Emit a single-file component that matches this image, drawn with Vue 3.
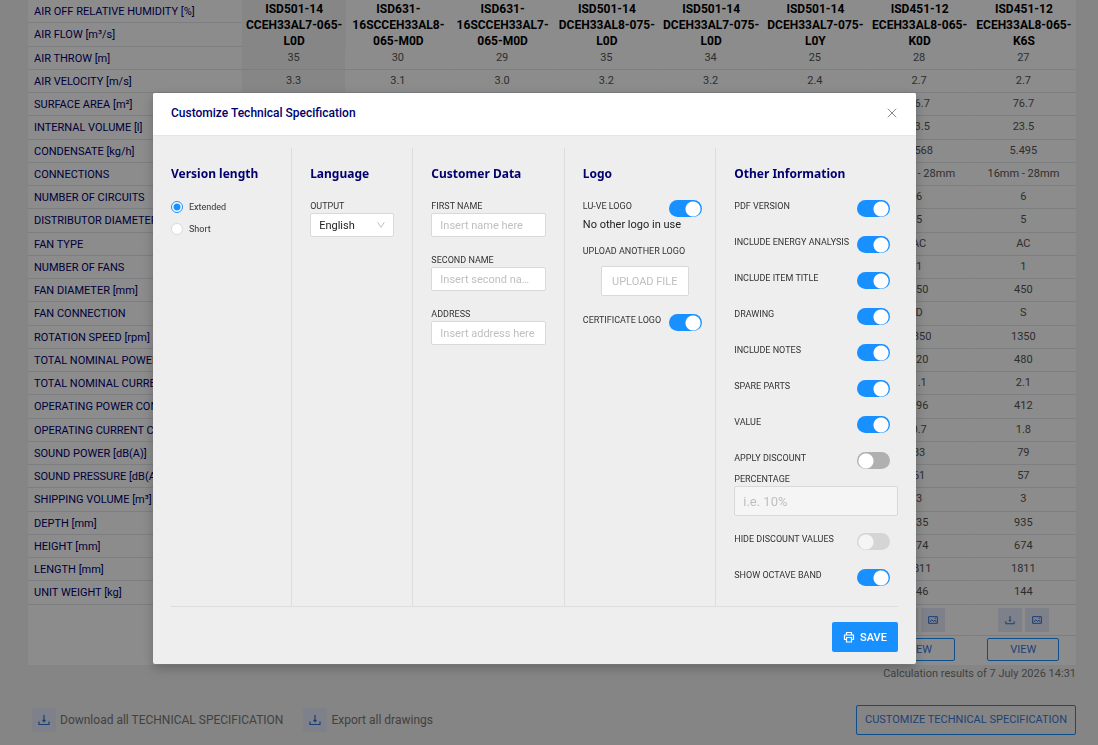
<script setup>
import { reactive, ref } from 'vue'

const models = [
  ['ISD501-14', 'CCEH33AL7-065-', 'L0D'],
  ['ISD631-', '16SCCEH33AL8-', '065-M0D'],
  ['ISD631-', '16SCCEH33AL7-', '065-M0D'],
  ['ISD501-14', 'DCEH33AL8-075-', 'L0D'],
  ['ISD501-14', 'DCEH33AL7-075-', 'L0D'],
  ['ISD501-14', 'DCEH33AL7-075-', 'L0Y'],
  ['ISD451-12', 'ECEH33AL8-065-', 'K0D'],
  ['ISD451-12', 'ECEH33AL8-065-', 'K6S'],
]

const tail = (a, b) => ['', '', '', '', '', '', a, b]

const rows = [
  { label: 'AIR OFF RELATIVE HUMIDITY [%]', values: tail('', '') },
  { label: 'AIR FLOW [m³/s]', values: tail('', '') },
  { label: 'AIR THROW [m]', values: ['35', '30', '29', '35', '34', '25', '28', '27'] },
  { label: 'AIR VELOCITY [m/s]', values: ['3.3', '3.1', '3.0', '3.2', '3.2', '2.4', '2.7', '2.7'] },
  { label: 'SURFACE AREA [m²]', values: tail('76.7', '76.7') },
  { label: 'INTERNAL VOLUME [l]', values: tail('23.5', '23.5') },
  { label: 'CONDENSATE [kg/h]', values: tail('5.568', '5.495') },
  { label: 'CONNECTIONS', values: tail('16mm - 28mm', '16mm - 28mm') },
  { label: 'NUMBER OF CIRCUITS', values: tail('6', '6') },
  { label: 'DISTRIBUTOR DIAMETER [mm]', values: tail('5', '5') },
  { label: 'FAN TYPE', values: tail('AC', 'AC') },
  { label: 'NUMBER OF FANS', values: tail('1', '1') },
  { label: 'FAN DIAMETER [mm]', values: tail('450', '450') },
  { label: 'FAN CONNECTION', values: tail('D', 'S') },
  { label: 'ROTATION SPEED [rpm]', values: tail('1350', '1350') },
  { label: 'TOTAL NOMINAL POWER [W]', values: tail('720', '480') },
  { label: 'TOTAL NOMINAL CURRENT [A]', values: tail('1.1', '2.1') },
  { label: 'OPERATING POWER CONS. [W]', values: tail('396', '412') },
  { label: 'OPERATING CURRENT CONS. [A]', values: tail('0.7', '1.8') },
  { label: 'SOUND POWER [dB(A)]', values: tail('83', '79') },
  { label: 'SOUND PRESSURE [dB(A)]', values: tail('61', '57') },
  { label: 'SHIPPING VOLUME [m³]', values: tail('3', '3') },
  { label: 'DEPTH [mm]', values: tail('935', '935') },
  { label: 'HEIGHT [mm]', values: tail('674', '674') },
  { label: 'LENGTH [mm]', values: tail('1811', '1811') },
  { label: 'UNIT WEIGHT [kg]', values: tail('146', '144') },
]

const version = ref('extended')
const language = ref('English')

const customer = reactive([
  { id: 'first-name', label: 'FIRST NAME', hint: 'Insert name here', value: '' },
  { id: 'second-name', label: 'SECOND NAME', hint: 'Insert second name here', value: '' },
  { id: 'address', label: 'ADDRESS', hint: 'Insert address here', value: '' },
])

const logo = reactive({ luve: true, certificate: true })

const options = reactive([
  { id: 'pdf', label: 'PDF VERSION', on: true },
  { id: 'energy', label: 'INCLUDE ENERGY ANALYSIS', on: true },
  { id: 'title', label: 'INCLUDE ITEM TITLE', on: true },
  { id: 'drawing', label: 'DRAWING', on: true },
  { id: 'notes', label: 'INCLUDE NOTES', on: true },
  { id: 'spare', label: 'SPARE PARTS', on: true },
  { id: 'value', label: 'VALUE', on: true },
])
const discount = ref(false)
const percentage = ref('')
const hideDiscount = ref(false)
const octave = ref(true)
</script>

<template>
  <main class="page">
    <table class="results">
      <colgroup>
        <col class="col-label" />
        <col v-for="n in 8" :key="n" />
      </colgroup>
      <thead>
        <tr>
          <td></td>
          <th v-for="(m, i) in models" :key="i" scope="col" :class="{ pinned: i === 0 }">
            <div v-for="part in m" :key="part">{{ part }}</div>
          </th>
        </tr>
      </thead>
      <tbody>
        <tr v-for="row in rows" :key="row.label">
          <th scope="row">{{ row.label }}</th>
          <td v-for="(v, i) in row.values" :key="i" :class="{ pinned: i === 0 }">{{ v }}</td>
        </tr>
        <tr class="files">
          <td rowspan="2"></td>
          <td v-for="n in 8" :key="n">
            <div class="tools">
              <button type="button" class="tool" aria-label="Download">
                <svg viewBox="0 0 12 12" width="10" height="10"><path d="M1 7.500v3h10v-3M6 1v6.500M4.500 6 6 7.600 7.500 6" /></svg>
              </button>
              <button type="button" class="tool" aria-label="Drawing">
                <svg viewBox="0 0 12 12" width="10" height="10"><path d="M.8 2h10.4v8H.8zM2 8.600l2.400-3 2.200 2.200L8.200 6 10 8.400M8 4h1.400" /></svg>
              </button>
            </div>
          </td>
        </tr>
        <tr class="views">
          <td v-for="n in 8" :key="n"><button type="button" class="view">VIEW</button></td>
        </tr>
      </tbody>
    </table>
    <p class="stamp">Calculation results of 7 July 2026 14:31</p>
    <div class="actions">
      <button type="button" class="bulk">
        <span class="tool">
          <svg viewBox="0 0 12 12" width="12" height="12"><path d="M1 7.500v3h10v-3M6 1v6.500M4.500 6 6 7.600 7.500 6" /></svg>
        </span>
        Download all TECHNICAL SPECIFICATION
      </button>
      <button type="button" class="bulk">
        <span class="tool">
          <svg viewBox="0 0 12 12" width="12" height="12"><path d="M1 7.500v3h10v-3M6 1v6.500M4.500 6 6 7.600 7.500 6" /></svg>
        </span>
        Export all drawings
      </button>
      <button type="button" class="customize">CUSTOMIZE TECHNICAL SPECIFICATION</button>
    </div>
  </main>

  <div class="mask">
    <section class="modal" role="dialog" aria-modal="true" aria-labelledby="dialog-title">
      <header class="bar">
        <h1 id="dialog-title">Customize Technical Specification</h1>
        <button type="button" class="close" aria-label="Close">
          <svg viewBox="0 0 12 12" width="10" height="10"><path d="M1 .8 11 11.2M11 .8 1 11.2" /></svg>
        </button>
      </header>
      <form class="body" @submit.prevent>
        <div class="columns">
          <section class="column">
            <h2>Version length</h2>
            <label class="choice"><input v-model="version" type="radio" name="version" value="extended" />Extended</label>
            <label class="choice"><input v-model="version" type="radio" name="version" value="short" />Short</label>
          </section>

          <section class="column">
            <h2>Language</h2>
            <div class="field">
              <label for="output">OUTPUT</label>
              <div class="picker">
                <select id="output" v-model="language"><option>English</option></select>
                <svg viewBox="0 0 10 10" width="8" height="8"><path d="M.8 1.5 5 8l4.2-6.5" /></svg>
              </div>
            </div>
          </section>

          <section class="column">
            <h2>Customer Data</h2>
            <div v-for="f in customer" :key="f.id" class="field">
              <label :for="f.id">{{ f.label }}</label>
              <input :id="f.id" v-model="f.value" type="text" :placeholder="f.hint" />
            </div>
          </section>

          <section class="column logos">
            <h2>Logo</h2>
            <div class="row short">
              <label for="luve">LU-VE LOGO</label>
              <input id="luve" v-model="logo.luve" class="switch" type="checkbox" role="switch" />
            </div>
            <p class="note">No other logo in use</p>
            <p class="caption">UPLOAD ANOTHER LOGO</p>
            <button type="button" class="upload">UPLOAD FILE</button>
            <div class="row">
              <label for="certificate">CERTIFICATE LOGO</label>
              <input id="certificate" v-model="logo.certificate" class="switch" type="checkbox" role="switch" />
            </div>
          </section>

          <section class="column">
            <h2>Other Information</h2>
            <div v-for="o in options" :key="o.id" class="row">
              <label :for="o.id">{{ o.label }}</label>
              <input :id="o.id" v-model="o.on" class="switch" type="checkbox" role="switch" />
            </div>
            <div class="row tight">
              <label for="discount">APPLY DISCOUNT</label>
              <input id="discount" v-model="discount" class="switch" type="checkbox" role="switch" />
            </div>
            <div class="field">
              <label for="percentage">PERCENTAGE</label>
              <input id="percentage" v-model="percentage" class="tall" type="text" placeholder="i.e. 10%" disabled />
            </div>
            <div class="row">
              <label for="hide">HIDE DISCOUNT VALUES</label>
              <input id="hide" v-model="hideDiscount" class="switch" type="checkbox" role="switch" disabled />
            </div>
            <div class="row">
              <label for="octave">SHOW OCTAVE BAND</label>
              <input id="octave" v-model="octave" class="switch" type="checkbox" role="switch" />
            </div>
          </section>
        </div>
        <footer class="footer">
          <button type="submit" class="save">
            <svg viewBox="0 0 12 12" width="12" height="12"><path d="M3.500 4V1.500h5V4M3.500 8.500H1.500V4h9v4.500h-2M3.500 6.500h5V11h-5z" /></svg>
            SAVE
          </button>
        </footer>
      </form>
    </section>
  </div>
</template>

<style>
body {
  margin: 0;
  background: #f2f2f2;
}
</style>

<style scoped>
* {
  box-sizing: border-box;
}
.page,
.mask {
  font-family: Roboto, "Liberation Sans", sans-serif;
  font-size: 11px;
}
button,
input,
select {
  font: inherit;
}
button {
  cursor: pointer;
}
h1,
h2,
p {
  margin: 0;
}
svg {
  fill: none;
  stroke: currentColor;
  stroke-width: 1.2;
}

/* Results page */
.page {
  display: flow-root;
  padding: 0 22px 10px 28px;
}
.results {
  width: 100%;
  margin-top: -50px;
  table-layout: fixed;
  border-spacing: 0;
  background: #fff;
}
.col-label {
  width: 214px;
}
thead th {
  position: sticky;
  top: 0;
  height: 50px;
  padding: 1px 0 0;
  vertical-align: top;
  background: #fff;
  color: #000;
  font-size: 12px;
  font-weight: 700;
  line-height: 16px;
  white-space: nowrap;
}
thead td {
  padding: 0;
}
tbody th,
tbody td {
  padding: 2px 0 1px;
  border-bottom: 1px solid #e3e5ea;
  line-height: 1.75;
  white-space: nowrap;
}
tbody th {
  padding-left: 6px;
  overflow: hidden;
  color: #00006e;
  font-weight: 400;
  text-align: left;
}
tbody td {
  padding: 1px 0 2px;
  border-right: 1px solid #fff;
  color: #555;
  text-align: center;
}
.pinned,
thead .pinned {
  background: #f4f4f4;
}
.files td {
  height: 31px;
  padding: 0;
}
.files td[rowspan],
.views td {
  border-bottom-color: #fff;
}
.views td {
  height: 29px;
  padding: 0;
}
.tools {
  display: flex;
  justify-content: center;
  gap: 3px;
}
.tool {
  display: inline-flex;
  align-items: center;
  justify-content: center;
  width: 24px;
  height: 24px;
  padding: 0;
  border: 0;
  background: #e6ebfa;
  color: #2f6fd6;
}
.view {
  width: 72px;
  height: 23px;
  padding: 0;
  border: 1px solid #1890ff;
  border-radius: 2px;
  background: #fff;
  color: #3a78d8;
}
.stamp {
  color: #777;
  font-size: 11px;
  line-height: 18px;
  text-align: right;
}
.actions {
  display: flex;
  align-items: center;
  gap: 20px;
  margin-top: 22px;
  padding-left: 4px;
}
.bulk {
  display: flex;
  align-items: center;
  gap: 4px;
  padding: 0;
  border: 0;
  background: none;
  color: #777;
  font-size: 12px;
}
.customize {
  height: 30px;
  margin-left: auto;
  padding: 0 8px;
  border: 1px solid #1890ff;
  border-radius: 2px;
  background: none;
  color: #3a78d8;
}

/* Dialog */
.mask {
  position: fixed;
  inset: 0;
  z-index: 10;
  padding: 93px 182px 0 153px;
  overflow: auto;
  background: rgba(0, 0, 0, 0.45);
}
.modal {
  border-radius: 2px;
  background: #eee;
  box-shadow: 0 4px 12px rgba(0, 0, 0, 0.25);
}
.bar {
  display: flex;
  align-items: center;
  justify-content: space-between;
  height: 43px;
  padding: 0 18px 2px;
  border-bottom: 1px solid #e6e6e6;
  border-radius: 2px 2px 0 0;
  background: #fff;
}
h1 {
  color: #00006e;
  font-size: 12px;
  font-weight: 500;
}
.close {
  display: flex;
  padding: 1px;
  border: 0;
  background: none;
  color: #888;
}
.body {
  padding: 12px 18px;
}
.columns {
  display: grid;
  grid-template-columns: 4fr 4fr 5fr 5fr 6fr;
}
.column {
  min-width: 0;
  padding: 16px 18px 1px;
  border-right: 1px solid #ddd;
}
.column:first-child {
  padding-left: 0;
}
.column:last-child {
  padding-right: 0;
  border-right: 0;
}
h2 {
  margin-bottom: 16px;
  color: #00006e;
  font-family: "Noto Sans", sans-serif;
  font-size: 12px;
  font-weight: 700;
  line-height: 20px;
  white-space: nowrap;
}
.column label,
.caption {
  color: #333;
  font-size: 9px;
  line-height: 12px;
  white-space: nowrap;
}
.choice {
  display: flex;
  align-items: center;
  gap: 6px;
  height: 14px;
  margin-bottom: 8px;
}
.choice input {
  width: 12px;
  height: 12px;
  margin: 0;
  border: 1px solid #d9d9d9;
  border-radius: 50%;
  appearance: none;
  background: #fff;
}
.choice input:checked {
  border-color: #1890ff;
  background: radial-gradient(circle, #1890ff 3px, #fff 4px);
}
.field {
  display: grid;
  gap: 1px;
  margin-bottom: 17px;
}
.field input,
select {
  width: 100%;
  height: 24px;
  padding: 0 8px;
  border: 1px solid #d9d9d9;
  border-radius: 2px;
  appearance: none;
  background: #fff;
  color: #222;
  text-overflow: ellipsis;
}
.field input::placeholder {
  color: #bfbfbf;
}
.field .tall {
  height: 30px;
  background: #f5f5f5;
  font-size: 13px;
}
.picker {
  display: grid;
  align-items: center;
}
.picker > * {
  grid-area: 1 / 1;
}
.picker svg {
  margin-right: 9px;
  justify-self: end;
  color: #bfbfbf;
  pointer-events: none;
}
.row {
  display: flex;
  align-items: flex-start;
  justify-content: space-between;
  height: 36px;
  padding-right: 8px;
}
.row.tight {
  height: 21px;
}
.logos {
  padding-right: 13px;
}
.logos .row {
  padding-right: 0;
}
.logos .short {
  height: 17px;
}
.switch {
  flex: none;
  width: 33px;
  height: 17px;
  margin: 0;
  border-radius: 9px;
  appearance: none;
  background: radial-gradient(circle at 9px 9px, #fff 7px, transparent 8px) #b0b0b0;
}
.switch:checked {
  background: radial-gradient(circle at 24px 9px, #fff 7px, transparent 8px) #1890ff;
}
.switch:disabled {
  opacity: 0.4;
}
.note {
  color: #222;
  line-height: 16px;
}
.caption {
  margin: 12px 0 9px;
}
.upload {
  display: block;
  width: 88px;
  height: 30px;
  margin: 0 0 18px 18px;
  padding: 0;
  border: 1px solid #d9d9d9;
  border-radius: 2px;
  background: #fff;
  color: #bfbfbf;
}
.footer {
  display: flex;
  justify-content: flex-end;
  padding-top: 15px;
  border-top: 1px solid #ddd;
}
.save {
  display: flex;
  align-items: center;
  justify-content: center;
  gap: 5px;
  width: 66px;
  height: 30px;
  padding: 0;
  border: 0;
  border-radius: 2px;
  background: #1890ff;
  color: #fff;
  font-weight: 500;
}
</style>
